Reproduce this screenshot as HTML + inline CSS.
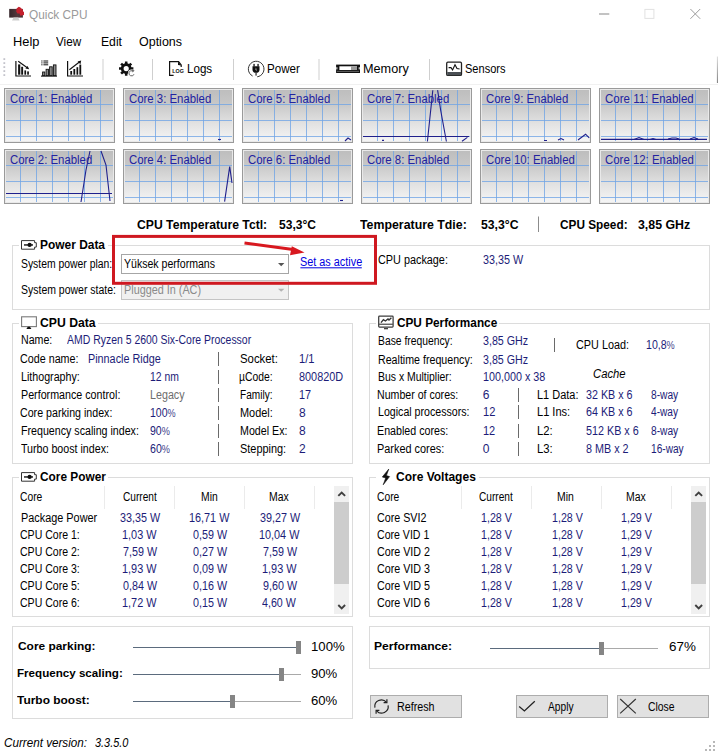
<!DOCTYPE html>
<html><head><meta charset="utf-8"><title>Quick CPU</title>
<style>
html,body{margin:0;padding:0;background:#fff;}
body{width:718px;height:752px;position:relative;overflow:hidden;font-family:"Liberation Sans",sans-serif;}
.t{position:absolute;white-space:nowrap;transform-origin:0 0;}
.a{position:absolute;box-sizing:border-box;}
.core{position:absolute;box-sizing:border-box;width:111px;height:55px;border:1px solid #9a9a9a;background:linear-gradient(#bdbdbd 0%,#c6c6c6 25%,#e2e2e2 65%,#f6f6f6 100%);box-shadow:inset 0 0 0 1px #e9e9e9;}
.gb{position:absolute;box-sizing:border-box;border:1px solid #dcdcdc;}
.btn{position:absolute;box-sizing:border-box;border:1px solid #adadad;background:#e1e1e1;}
svg{position:absolute;left:0;top:0;}
</style></head><body>
<div class="core" style="left:4px;top:88px"></div>
<div class="core" style="left:123px;top:88px"></div>
<div class="core" style="left:242px;top:88px"></div>
<div class="core" style="left:361px;top:88px"></div>
<div class="core" style="left:480px;top:88px"></div>
<div class="core" style="left:599px;top:88px"></div>
<div class="core" style="left:4px;top:149px"></div>
<div class="core" style="left:123px;top:149px"></div>
<div class="core" style="left:242px;top:149px"></div>
<div class="core" style="left:361px;top:149px"></div>
<div class="core" style="left:480px;top:149px"></div>
<div class="core" style="left:599px;top:149px"></div>
<div class="gb" style="left:12px;top:245px;width:698px;height:65px"></div>
<div class="a" style="left:19px;top:243px;width:89px;height:5px;background:#fff"></div>
<div class="gb" style="left:12px;top:323px;width:341px;height:141px"></div>
<div class="a" style="left:19px;top:321px;width:79px;height:5px;background:#fff"></div>
<div class="gb" style="left:369px;top:323px;width:341px;height:141px"></div>
<div class="a" style="left:376px;top:321px;width:123px;height:5px;background:#fff"></div>
<div class="gb" style="left:12px;top:477px;width:341px;height:140px"></div>
<div class="a" style="left:19px;top:475px;width:89px;height:5px;background:#fff"></div>
<div class="gb" style="left:369px;top:477px;width:341px;height:140px"></div>
<div class="a" style="left:376px;top:475px;width:103px;height:5px;background:#fff"></div>
<div class="gb" style="left:12px;top:626px;width:341px;height:93px"></div>
<div class="gb" style="left:369px;top:626px;width:341px;height:43px"></div>
<div class="a" style="left:120.6px;top:253.6px;width:168px;height:20px;border:1px solid #a6a6a6;background:#fff"></div>
<div class="a" style="left:120.6px;top:280px;width:168px;height:20px;border:1px solid #c4c4c4;background:#f0f0f0"></div>
<div class="a" style="left:104px;top:486px;width:1px;height:23px;background:#ebebeb"></div>
<div class="a" style="left:174px;top:486px;width:1px;height:23px;background:#ebebeb"></div>
<div class="a" style="left:244px;top:486px;width:1px;height:23px;background:#ebebeb"></div>
<div class="a" style="left:314px;top:486px;width:1px;height:23px;background:#ebebeb"></div>
<div class="a" style="left:461px;top:486px;width:1px;height:23px;background:#ebebeb"></div>
<div class="a" style="left:531px;top:486px;width:1px;height:23px;background:#ebebeb"></div>
<div class="a" style="left:601px;top:486px;width:1px;height:23px;background:#ebebeb"></div>
<div class="a" style="left:671px;top:486px;width:1px;height:23px;background:#ebebeb"></div>
<div class="a" style="left:334.4px;top:485.7px;width:14.8px;height:128.8px;background:#f0f0f0"></div>
<div class="a" style="left:334.4px;top:501.8px;width:14.6px;height:82.3px;background:#cdcdcd"></div>
<div class="a" style="left:691.4px;top:485.7px;width:14.8px;height:128.8px;background:#f0f0f0"></div>
<div class="a" style="left:691.4px;top:501.8px;width:14.6px;height:82.3px;background:#cdcdcd"></div>
<div class="a" style="left:133px;top:647px;width:163px;height:1px;background:#5b6b7d"></div>
<div class="a" style="left:296px;top:647px;width:5px;height:1px;background:#a9a9a9"></div>
<div class="a" style="left:296px;top:641px;width:4.8px;height:12.8px;background:#858585"></div>
<div class="a" style="left:133px;top:674px;width:146px;height:1px;background:#5b6b7d"></div>
<div class="a" style="left:279px;top:674px;width:22px;height:1px;background:#a9a9a9"></div>
<div class="a" style="left:279px;top:668px;width:4.8px;height:12.8px;background:#858585"></div>
<div class="a" style="left:133px;top:701px;width:97px;height:1px;background:#5b6b7d"></div>
<div class="a" style="left:230px;top:701px;width:71px;height:1px;background:#a9a9a9"></div>
<div class="a" style="left:230px;top:695px;width:4.8px;height:12.8px;background:#858585"></div>
<div class="a" style="left:490px;top:648px;width:109.39999999999998px;height:1px;background:#5b6b7d"></div>
<div class="a" style="left:599.4px;top:648px;width:58.60000000000002px;height:1px;background:#a9a9a9"></div>
<div class="a" style="left:599.4px;top:642px;width:4.8px;height:12.8px;background:#858585"></div>
<div class="btn" style="left:370px;top:695px;width:92px;height:23px"></div>
<div class="btn" style="left:516px;top:695px;width:92px;height:23px"></div>
<div class="btn" style="left:617px;top:695px;width:92px;height:23px"></div>
<div class="a" style="left:218px;top:351.6px;width:1px;height:14px;background:#6a6a6a"></div>
<div class="a" style="left:218px;top:369.5px;width:1px;height:14px;background:#6a6a6a"></div>
<div class="a" style="left:218px;top:387.5px;width:1px;height:14px;background:#6a6a6a"></div>
<div class="a" style="left:218px;top:405.5px;width:1px;height:14px;background:#6a6a6a"></div>
<div class="a" style="left:218px;top:423.5px;width:1px;height:14px;background:#6a6a6a"></div>
<div class="a" style="left:218px;top:441.5px;width:1px;height:14px;background:#6a6a6a"></div>
<div class="a" style="left:554px;top:337.5px;width:1px;height:14.5px;background:#6a6a6a"></div>
<div class="a" style="left:518px;top:387.5px;width:1px;height:14px;background:#6a6a6a"></div>
<div class="a" style="left:518px;top:404.7px;width:1px;height:14px;background:#6a6a6a"></div>
<div class="a" style="left:518px;top:423.5px;width:1px;height:14px;background:#6a6a6a"></div>
<div class="a" style="left:518px;top:441.5px;width:1px;height:14px;background:#6a6a6a"></div>
<svg width="718" height="752" viewBox="0 0 718 752">
<rect x="0" y="84" width="718" height="1" fill="#f1f1f1"/>
<rect x="20" y="90" width="1" height="51" fill="#6fa4e6" opacity="0.78"/>
<rect x="36" y="90" width="1" height="51" fill="#6fa4e6" opacity="0.78"/>
<rect x="52" y="90" width="1" height="51" fill="#6fa4e6" opacity="0.78"/>
<rect x="68" y="90" width="1" height="51" fill="#6fa4e6" opacity="0.78"/>
<rect x="84" y="90" width="1" height="51" fill="#6fa4e6" opacity="0.78"/>
<rect x="100" y="90" width="1" height="51" fill="#6fa4e6" opacity="0.78"/>
<rect x="6" y="104" width="107" height="1" fill="#6fa4e6" opacity="0.78"/>
<rect x="6" y="120" width="107" height="1" fill="#6fa4e6" opacity="0.78"/>
<rect x="6" y="136" width="107" height="1" fill="#6fa4e6" opacity="0.78"/>
<rect x="139" y="90" width="1" height="51" fill="#6fa4e6" opacity="0.78"/>
<rect x="155" y="90" width="1" height="51" fill="#6fa4e6" opacity="0.78"/>
<rect x="171" y="90" width="1" height="51" fill="#6fa4e6" opacity="0.78"/>
<rect x="187" y="90" width="1" height="51" fill="#6fa4e6" opacity="0.78"/>
<rect x="203" y="90" width="1" height="51" fill="#6fa4e6" opacity="0.78"/>
<rect x="219" y="90" width="1" height="51" fill="#6fa4e6" opacity="0.78"/>
<rect x="125" y="104" width="107" height="1" fill="#6fa4e6" opacity="0.78"/>
<rect x="125" y="120" width="107" height="1" fill="#6fa4e6" opacity="0.78"/>
<rect x="125" y="136" width="107" height="1" fill="#6fa4e6" opacity="0.78"/>
<rect x="258" y="90" width="1" height="51" fill="#6fa4e6" opacity="0.78"/>
<rect x="274" y="90" width="1" height="51" fill="#6fa4e6" opacity="0.78"/>
<rect x="290" y="90" width="1" height="51" fill="#6fa4e6" opacity="0.78"/>
<rect x="306" y="90" width="1" height="51" fill="#6fa4e6" opacity="0.78"/>
<rect x="322" y="90" width="1" height="51" fill="#6fa4e6" opacity="0.78"/>
<rect x="338" y="90" width="1" height="51" fill="#6fa4e6" opacity="0.78"/>
<rect x="244" y="104" width="107" height="1" fill="#6fa4e6" opacity="0.78"/>
<rect x="244" y="120" width="107" height="1" fill="#6fa4e6" opacity="0.78"/>
<rect x="244" y="136" width="107" height="1" fill="#6fa4e6" opacity="0.78"/>
<rect x="377" y="90" width="1" height="51" fill="#6fa4e6" opacity="0.78"/>
<rect x="393" y="90" width="1" height="51" fill="#6fa4e6" opacity="0.78"/>
<rect x="409" y="90" width="1" height="51" fill="#6fa4e6" opacity="0.78"/>
<rect x="425" y="90" width="1" height="51" fill="#6fa4e6" opacity="0.78"/>
<rect x="441" y="90" width="1" height="51" fill="#6fa4e6" opacity="0.78"/>
<rect x="457" y="90" width="1" height="51" fill="#6fa4e6" opacity="0.78"/>
<rect x="363" y="104" width="107" height="1" fill="#6fa4e6" opacity="0.78"/>
<rect x="363" y="120" width="107" height="1" fill="#6fa4e6" opacity="0.78"/>
<rect x="363" y="136" width="107" height="1" fill="#6fa4e6" opacity="0.78"/>
<rect x="496" y="90" width="1" height="51" fill="#6fa4e6" opacity="0.78"/>
<rect x="512" y="90" width="1" height="51" fill="#6fa4e6" opacity="0.78"/>
<rect x="528" y="90" width="1" height="51" fill="#6fa4e6" opacity="0.78"/>
<rect x="544" y="90" width="1" height="51" fill="#6fa4e6" opacity="0.78"/>
<rect x="560" y="90" width="1" height="51" fill="#6fa4e6" opacity="0.78"/>
<rect x="576" y="90" width="1" height="51" fill="#6fa4e6" opacity="0.78"/>
<rect x="482" y="104" width="107" height="1" fill="#6fa4e6" opacity="0.78"/>
<rect x="482" y="120" width="107" height="1" fill="#6fa4e6" opacity="0.78"/>
<rect x="482" y="136" width="107" height="1" fill="#6fa4e6" opacity="0.78"/>
<rect x="615" y="90" width="1" height="51" fill="#6fa4e6" opacity="0.78"/>
<rect x="631" y="90" width="1" height="51" fill="#6fa4e6" opacity="0.78"/>
<rect x="647" y="90" width="1" height="51" fill="#6fa4e6" opacity="0.78"/>
<rect x="663" y="90" width="1" height="51" fill="#6fa4e6" opacity="0.78"/>
<rect x="679" y="90" width="1" height="51" fill="#6fa4e6" opacity="0.78"/>
<rect x="695" y="90" width="1" height="51" fill="#6fa4e6" opacity="0.78"/>
<rect x="601" y="104" width="107" height="1" fill="#6fa4e6" opacity="0.78"/>
<rect x="601" y="120" width="107" height="1" fill="#6fa4e6" opacity="0.78"/>
<rect x="601" y="136" width="107" height="1" fill="#6fa4e6" opacity="0.78"/>
<rect x="20" y="151" width="1" height="51" fill="#6fa4e6" opacity="0.78"/>
<rect x="36" y="151" width="1" height="51" fill="#6fa4e6" opacity="0.78"/>
<rect x="52" y="151" width="1" height="51" fill="#6fa4e6" opacity="0.78"/>
<rect x="68" y="151" width="1" height="51" fill="#6fa4e6" opacity="0.78"/>
<rect x="84" y="151" width="1" height="51" fill="#6fa4e6" opacity="0.78"/>
<rect x="100" y="151" width="1" height="51" fill="#6fa4e6" opacity="0.78"/>
<rect x="6" y="165" width="107" height="1" fill="#6fa4e6" opacity="0.78"/>
<rect x="6" y="181" width="107" height="1" fill="#6fa4e6" opacity="0.78"/>
<rect x="6" y="197" width="107" height="1" fill="#6fa4e6" opacity="0.78"/>
<rect x="139" y="151" width="1" height="51" fill="#6fa4e6" opacity="0.78"/>
<rect x="155" y="151" width="1" height="51" fill="#6fa4e6" opacity="0.78"/>
<rect x="171" y="151" width="1" height="51" fill="#6fa4e6" opacity="0.78"/>
<rect x="187" y="151" width="1" height="51" fill="#6fa4e6" opacity="0.78"/>
<rect x="203" y="151" width="1" height="51" fill="#6fa4e6" opacity="0.78"/>
<rect x="219" y="151" width="1" height="51" fill="#6fa4e6" opacity="0.78"/>
<rect x="125" y="165" width="107" height="1" fill="#6fa4e6" opacity="0.78"/>
<rect x="125" y="181" width="107" height="1" fill="#6fa4e6" opacity="0.78"/>
<rect x="125" y="197" width="107" height="1" fill="#6fa4e6" opacity="0.78"/>
<rect x="258" y="151" width="1" height="51" fill="#6fa4e6" opacity="0.78"/>
<rect x="274" y="151" width="1" height="51" fill="#6fa4e6" opacity="0.78"/>
<rect x="290" y="151" width="1" height="51" fill="#6fa4e6" opacity="0.78"/>
<rect x="306" y="151" width="1" height="51" fill="#6fa4e6" opacity="0.78"/>
<rect x="322" y="151" width="1" height="51" fill="#6fa4e6" opacity="0.78"/>
<rect x="338" y="151" width="1" height="51" fill="#6fa4e6" opacity="0.78"/>
<rect x="244" y="165" width="107" height="1" fill="#6fa4e6" opacity="0.78"/>
<rect x="244" y="181" width="107" height="1" fill="#6fa4e6" opacity="0.78"/>
<rect x="244" y="197" width="107" height="1" fill="#6fa4e6" opacity="0.78"/>
<rect x="377" y="151" width="1" height="51" fill="#6fa4e6" opacity="0.78"/>
<rect x="393" y="151" width="1" height="51" fill="#6fa4e6" opacity="0.78"/>
<rect x="409" y="151" width="1" height="51" fill="#6fa4e6" opacity="0.78"/>
<rect x="425" y="151" width="1" height="51" fill="#6fa4e6" opacity="0.78"/>
<rect x="441" y="151" width="1" height="51" fill="#6fa4e6" opacity="0.78"/>
<rect x="457" y="151" width="1" height="51" fill="#6fa4e6" opacity="0.78"/>
<rect x="363" y="165" width="107" height="1" fill="#6fa4e6" opacity="0.78"/>
<rect x="363" y="181" width="107" height="1" fill="#6fa4e6" opacity="0.78"/>
<rect x="363" y="197" width="107" height="1" fill="#6fa4e6" opacity="0.78"/>
<rect x="496" y="151" width="1" height="51" fill="#6fa4e6" opacity="0.78"/>
<rect x="512" y="151" width="1" height="51" fill="#6fa4e6" opacity="0.78"/>
<rect x="528" y="151" width="1" height="51" fill="#6fa4e6" opacity="0.78"/>
<rect x="544" y="151" width="1" height="51" fill="#6fa4e6" opacity="0.78"/>
<rect x="560" y="151" width="1" height="51" fill="#6fa4e6" opacity="0.78"/>
<rect x="576" y="151" width="1" height="51" fill="#6fa4e6" opacity="0.78"/>
<rect x="482" y="165" width="107" height="1" fill="#6fa4e6" opacity="0.78"/>
<rect x="482" y="181" width="107" height="1" fill="#6fa4e6" opacity="0.78"/>
<rect x="482" y="197" width="107" height="1" fill="#6fa4e6" opacity="0.78"/>
<rect x="615" y="151" width="1" height="51" fill="#6fa4e6" opacity="0.78"/>
<rect x="631" y="151" width="1" height="51" fill="#6fa4e6" opacity="0.78"/>
<rect x="647" y="151" width="1" height="51" fill="#6fa4e6" opacity="0.78"/>
<rect x="663" y="151" width="1" height="51" fill="#6fa4e6" opacity="0.78"/>
<rect x="679" y="151" width="1" height="51" fill="#6fa4e6" opacity="0.78"/>
<rect x="695" y="151" width="1" height="51" fill="#6fa4e6" opacity="0.78"/>
<rect x="601" y="165" width="107" height="1" fill="#6fa4e6" opacity="0.78"/>
<rect x="601" y="181" width="107" height="1" fill="#6fa4e6" opacity="0.78"/>
<rect x="601" y="197" width="107" height="1" fill="#6fa4e6" opacity="0.78"/>
<path d="M6 193.5H112" stroke="#20208c" stroke-width="1.1" fill="none" stroke-width="1.3"/>
<path d="M81 202 L86 170 L90 151" stroke="#20208c" stroke-width="1.1" fill="none"/>
<path d="M101 151 L106 165 L110 201" stroke="#20208c" stroke-width="1.1" fill="none"/>
<path d="M224.6 201.6 L229.7 166.6 L232 183" stroke="#20208c" stroke-width="1.1" fill="none" stroke-width="1.2"/>
<path d="M218 139.5h3" stroke="#20208c" stroke-width="1.1" fill="none"/>
<path d="M345 141l3-3 3 2" stroke="#20208c" stroke-width="1.1" fill="none"/>
<path d="M340 200.5h3" stroke="#20208c" stroke-width="1.1" fill="none"/>
<path d="M363 136.5H469" stroke="#20208c" stroke-width="1.1" fill="none" stroke-width="1.3"/>
<path d="M427.4 141.5 L432.8 90.2 M437.6 90.2 L440.8 111 L446.4 141.5" stroke="#20208c" stroke-width="1.1" fill="none" stroke-width="1.2"/>
<path d="M382 140.4h2" stroke="#20208c" stroke-width="1.1" fill="none"/>
<path d="M462 141.2l5.4-3.8" stroke="#20208c" stroke-width="1.1" fill="none" stroke-width="1.3"/>
<path d="M544 140.5h3 M558 140l3-1.5 3 1.5 M578 140l7.6-5.8 3.6 3.6" stroke="#20208c" stroke-width="1.1" fill="none"/>
<path d="M601 139.4H707" stroke="#20208c" stroke-width="1.1" fill="none" stroke-width="1.7"/>
<path d="M634 139.5l5-2 5 2 M650 139.5l3-1 3 1 M668 139l4-1h4l3 1 M690 139l4-1.5 4 1.5" stroke="#20208c" stroke-width="1.1" fill="none"/>
<defs><linearGradient id="eg" x1="0" x2="0" y1="0" y2="1"><stop offset="0" stop-color="#dedede"/><stop offset="1" stop-color="#858585"/></linearGradient></defs>
<rect x="716.9" y="56.5" width="1.1" height="26.5" fill="url(#eg)"/>
<rect x="538" y="216.5" width="1" height="15.5" fill="#8c8c8c"/>
<rect x="113.5" y="236.4" width="262" height="46.9" fill="none" stroke="#cf1820" stroke-width="3"/>
<path d="M244.5 243 L293 249.6" stroke="#d8181f" stroke-width="3" fill="none"/>
<path d="M291.8 246.2 L304.5 252.6 L290 255.2 Z" fill="#d8181f"/>
<defs><linearGradient id="mg" x1="0" x2="1" y1="0" y2="0"><stop offset="0" stop-color="#35262a"/><stop offset="0.6" stop-color="#54383d"/><stop offset="1" stop-color="#4a3034"/></linearGradient></defs>
<rect x="9.2" y="8.9" width="13.7" height="8.7" fill="url(#mg)"/>
<path d="M12 20.5 L13.6 17.6 H18.2 L19.6 20.5 Z" fill="#cdcdcd"/>
<path d="M16.2 11.6 L16.6 8.6 L18.8 6.8 L20.4 7.4 L21.4 8.6 L22.9 9.4 L22.9 11.2 L24 12 L24 15 L20.2 15.7 L19.6 13.4 L17.4 13.4 Z" fill="#c4202d"/>
<rect x="599" y="13.5" width="10.3" height="1" fill="#888"/>
<rect x="644.9" y="9.4" width="9" height="9" fill="none" stroke="#e2e2e2" stroke-width="1"/>
<path d="M690.4 9 L700.2 18.8 M700.2 9 L690.4 18.8" stroke="#9c9c9c" stroke-width="1" fill="none"/>
<rect x="3.4" y="58.2" width="1.8" height="1.8" fill="#c3c3cb"/>
<rect x="3.4" y="62.2" width="1.8" height="1.8" fill="#c3c3cb"/>
<rect x="3.4" y="66.2" width="1.8" height="1.8" fill="#c3c3cb"/>
<rect x="3.4" y="70.2" width="1.8" height="1.8" fill="#c3c3cb"/>
<rect x="3.4" y="74.2" width="1.8" height="1.8" fill="#c3c3cb"/>
<rect x="102.5" y="59" width="1" height="21" fill="#cfcfcf"/>
<rect x="152.0" y="59" width="1" height="21" fill="#cfcfcf"/>
<rect x="233.0" y="59" width="1" height="21" fill="#cfcfcf"/>
<rect x="318.5" y="59" width="1" height="21" fill="#cfcfcf"/>
<rect x="429.0" y="59" width="1" height="21" fill="#cfcfcf"/>
<path d="M15.9 61 V76 H31" stroke="#111" stroke-width="1.2" fill="none"/>
<rect x="18.1" y="64.4" width="2.2" height="10.3" fill="#111"/>
<rect x="21.2" y="66.8" width="1.9" height="7.9" fill="#111"/>
<rect x="24.4" y="70.4" width="1.7" height="4.3" fill="#111"/>
<rect x="27.2" y="71.4" width="1.7" height="3.3" fill="#111"/>
<path d="M18.2 61.2 L27.6 68" stroke="#111" stroke-width="1.1" fill="none"/>
<path d="M29.2 69.2 L25.4 68.4 L27.6 66 Z" fill="#111"/>
<path d="M41 76.1 H57" stroke="#111" stroke-width="1.1" fill="none"/>
<rect x="42.6" y="72" width="2.2" height="3.6" fill="#8c8c8c" stroke="#111" stroke-width="0.9"/>
<rect x="46.1" y="69.3" width="2.4" height="6.3" fill="#8c8c8c" stroke="#111" stroke-width="0.9"/>
<rect x="49.6" y="66.8" width="2.6" height="8.8" fill="#8c8c8c" stroke="#111" stroke-width="0.9"/>
<rect x="53.4" y="64.9" width="2.6" height="10.7" fill="#8c8c8c" stroke="#111" stroke-width="0.9"/>
<rect x="41.3" y="60.5" width="1.2" height="1" fill="#111"/><rect x="43.4" y="60.5" width="4.8" height="1" fill="#111"/>
<rect x="41.3" y="62.4" width="1.2" height="1" fill="#111"/><rect x="43.4" y="62.4" width="4.8" height="1" fill="#111"/>
<rect x="41.3" y="64.3" width="1.2" height="1" fill="#111"/><rect x="43.4" y="64.3" width="4.8" height="1" fill="#111"/>
<path d="M67.6 61 V76 H83" stroke="#111" stroke-width="1.2" fill="none"/>
<rect x="70.3" y="71" width="1.8" height="3.7" fill="#111"/>
<rect x="73.4" y="69" width="1.8" height="5.7" fill="#111"/>
<rect x="76.5" y="67.2" width="1.7" height="7.5" fill="#111"/>
<rect x="79.4" y="64.6" width="1.8" height="10.1" fill="#111"/>
<path d="M69.4 69.8 L79.4 62" stroke="#111" stroke-width="1.1" fill="none"/>
<path d="M81.2 60.6 L80.4 64.2 L77.6 61.4 Z" fill="#111"/>
<path d="M133.39 67.34 L133.39 69.86 L131.45 69.86 L130.80 71.42 L132.17 72.80 L130.40 74.57 L129.02 73.20 L127.46 73.85 L127.46 75.79 L124.94 75.79 L124.94 73.85 L123.38 73.20 L122.00 74.57 L120.23 72.80 L121.60 71.42 L120.95 69.86 L119.01 69.86 L119.01 67.34 L120.95 67.34 L121.60 65.78 L120.23 64.40 L122.00 62.63 L123.38 64.00 L124.94 63.35 L124.94 61.41 L127.46 61.41 L127.46 63.35 L129.02 64.00 L130.40 62.63 L132.17 64.40 L130.80 65.78 L131.45 67.34 Z M128.80 68.60 A2.6 2.6 0 1 0 123.60 68.60 A2.6 2.6 0 1 0 128.80 68.60 Z" fill="#111" fill-rule="evenodd"/>
<circle cx="131.6" cy="73.2" r="3.6" fill="#fff"/>
<path d="M134 74.2 A2.6 2.6 0 1 1 132.6 70.9" stroke="#666" stroke-width="1" fill="none"/>
<path d="M131.6 69.6 L134.6 70.4 L132.6 72.6 Z" fill="#666"/>
<path d="M173.6 75.4 H169.6 V61.6 H178.6 L181.2 65 V67" stroke="#111" stroke-width="1.2" fill="none"/>
<path d="M178 61.6 L181.4 65.6 L178 65 Z" fill="#111"/>
<text x="172.3" y="72.8" font-family="Liberation Sans, sans-serif" font-weight="700" font-size="6.2" textLength="11.6" lengthAdjust="spacingAndGlyphs" fill="#111">LOG</text>
<path d="M252.6 76 A7.8 7.8 0 1 1 257.2 76.8" stroke="#333" stroke-width="1" fill="none"/>
<path d="M252.5 66.3 H259.5 V69.4 Q259.5 72.8 256 72.8 Q252.5 72.8 252.5 69.4 Z" fill="#111"/>
<rect x="253.4" y="63.9" width="1.3" height="2.6" fill="#111"/><rect x="257.4" y="63.9" width="1.3" height="2.6" fill="#111"/>
<rect x="255.5" y="72.6" width="1.1" height="3" fill="#111"/>
<path d="M255.4 67.6 L256.8 69.2 L256 69.4 L257 71.2 L255.2 69.6 L256 69.2 Z" fill="#fff"/>
<rect x="336.1" y="64.6" width="23.9" height="8.4" fill="#111"/>
<rect x="339.4" y="66.3" width="17.6" height="3.7" fill="#fff"/>
<rect x="351" y="66.3" width="6" height="3.7" fill="#9a9a9a"/>
<rect x="336.1" y="67.2" width="1.4" height="2.2" fill="#bbb"/><rect x="358.6" y="67.2" width="1.4" height="2.2" fill="#bbb"/>
<rect x="337" y="70.9" width="22" height="0.7" fill="#888"/>
<rect x="446.7" y="62.2" width="14.8" height="13.2" rx="1.2" fill="#fff" stroke="#222" stroke-width="1.3"/>
<rect x="447.2" y="72" width="13.8" height="3.2" fill="#4a4f54"/>
<path d="M448.6 67.6 H451 L452.6 70 L455 64.8 L457 68.6 L459.6 69" stroke="#111" stroke-width="1.1" fill="none"/>
<path d="M21.5 240.6 H34.6 V242.7 H36.3 V247.1 H34.6 V249.2 H21.5 Z" fill="#fff" stroke="#333" stroke-width="1"/>
<rect x="24" y="244.2" width="9" height="1.5" fill="#222"/>
<ellipse cx="29.6" cy="244.95" rx="2.1" ry="2.1" fill="#111"/>
<path d="M21.5 472.6 H34.6 V474.70000000000005 H36.3 V479.1 H34.6 V481.20000000000005 H21.5 Z" fill="#fff" stroke="#333" stroke-width="1"/>
<rect x="24" y="476.20000000000005" width="9" height="1.5" fill="#222"/>
<ellipse cx="29.6" cy="476.95000000000005" rx="2.1" ry="2.1" fill="#111"/>
<rect x="21.6" y="316.8" width="14.8" height="9.8" fill="#fff" stroke="#7a7a7a" stroke-width="1.1"/>
<path d="M26.4 329 L27.8 326.8 H30 L31.4 329 Z" fill="#111"/>
<rect x="378.7" y="316.1" width="14.4" height="11" rx="0.8" fill="#fff" stroke="#3c3c3c" stroke-width="1.25"/>
<rect x="379" y="323.6" width="14" height="1.3" fill="#555"/>
<path d="M381 322.6 L383.4 319.6 L385.4 321 L388 319 L389 320 L391.4 317.8" stroke="#333" stroke-width="1.4" fill="none"/>
<rect x="384" y="328" width="4" height="1.3" fill="#444"/>
<path d="M388.8 469 L382.3 477 L385.7 478 L383.2 484.8 L389.6 476.6 L386.4 475.6 Z" fill="#111" stroke="#111" stroke-width="0.6"/>
<path d="M278 263.1 H284.4 L281.2 266.2 Z" fill="#555"/>
<path d="M278 288.8 H284.4 L281.2 291.8 Z" fill="#b4b4b4"/>
<rect x="300.4" y="267.3" width="61.4" height="1" fill="#0000e0"/>
<path d="M338.3 495.9 L341.7 492.5 L345.09999999999997 495.9" stroke="#404040" stroke-width="1.9" fill="none"/>
<path d="M338.3 605 L341.7 608.4 L345.09999999999997 605" stroke="#404040" stroke-width="1.9" fill="none"/>
<path d="M695.3 495.9 L698.6999999999999 492.5 L702.0999999999999 495.9" stroke="#404040" stroke-width="1.9" fill="none"/>
<path d="M695.3 605 L698.6999999999999 608.4 L702.0999999999999 605" stroke="#404040" stroke-width="1.9" fill="none"/>
<path d="M374.9 707.6 A6.6 6.6 0 0 1 386.4 702.2 M388.1 705.4 A6.6 6.6 0 0 1 376.6 710.8" stroke="#222" stroke-width="1.2" fill="none"/>
<path d="M383.6 702.6 H386.9 V699.2 M379.4 710.4 H376.1 V713.8" stroke="#222" stroke-width="1.2" fill="none"/>
<path d="M519.2 706.4 L524.4 710.9 L534.8 701.3" stroke="#222" stroke-width="1.3" fill="none"/>
<path d="M620.2 699 L635.8 713.4 M635.8 699 L620.2 713.4" stroke="#333" stroke-width="1.15" fill="none"/>
<rect x="713" y="741" width="2" height="2" fill="#b8b8b8"/>
<rect x="709" y="745" width="2" height="2" fill="#b8b8b8"/>
<rect x="713" y="745" width="2" height="2" fill="#b8b8b8"/>
<rect x="705" y="749" width="2" height="2" fill="#b8b8b8"/>
<rect x="709" y="749" width="2" height="2" fill="#b8b8b8"/>
<rect x="713" y="749" width="2" height="2" fill="#b8b8b8"/>
</svg>
<span class="t" style="left:28.50px;top:7.00px;font-size:12.5px;line-height:16px;color:#9a9a9a;transform:scaleX(0.9461);">Quick CPU</span>
<span class="t" style="left:12.55px;top:34.00px;font-size:13px;line-height:16px;color:#000;transform:scaleX(0.9861);">Help</span>
<span class="t" style="left:56.25px;top:34.00px;font-size:13px;line-height:16px;color:#000;transform:scaleX(0.9010);">View</span>
<span class="t" style="left:100.55px;top:34.00px;font-size:13px;line-height:16px;color:#000;transform:scaleX(0.9365);">Edit</span>
<span class="t" style="left:139.25px;top:34.00px;font-size:13px;line-height:16px;color:#000;transform:scaleX(0.9598);">Options</span>
<span class="t" style="left:187.20px;top:61.00px;font-size:13px;line-height:16px;color:#000;transform:scaleX(0.8925);">Logs</span>
<span class="t" style="left:267.05px;top:61.00px;font-size:13px;line-height:16px;color:#000;transform:scaleX(0.8916);">Power</span>
<span class="t" style="left:362.65px;top:61.00px;font-size:13px;line-height:16px;color:#000;transform:scaleX(0.9738);">Memory</span>
<span class="t" style="left:464.60px;top:61.00px;font-size:13px;line-height:16px;color:#000;transform:scaleX(0.8495);">Sensors</span>
<span class="t" style="left:9.75px;top:91.00px;font-size:12.3px;line-height:16px;color:#2323a0;transform:scaleX(0.9255);">Core 1: Enabled</span>
<span class="t" style="left:128.75px;top:91.00px;font-size:12.3px;line-height:16px;color:#2323a0;transform:scaleX(0.9255);">Core 3: Enabled</span>
<span class="t" style="left:247.75px;top:91.00px;font-size:12.3px;line-height:16px;color:#2323a0;transform:scaleX(0.9255);">Core 5: Enabled</span>
<span class="t" style="left:366.75px;top:91.00px;font-size:12.3px;line-height:16px;color:#2323a0;transform:scaleX(0.9255);">Core 7: Enabled</span>
<span class="t" style="left:485.75px;top:91.00px;font-size:12.3px;line-height:16px;color:#2323a0;transform:scaleX(0.9255);">Core 9: Enabled</span>
<span class="t" style="left:604.75px;top:91.00px;font-size:12.3px;line-height:16px;color:#2323a0;transform:scaleX(0.9357);">Core 11: Enabled</span>
<span class="t" style="left:9.75px;top:152.00px;font-size:12.3px;line-height:16px;color:#2323a0;transform:scaleX(0.9255);">Core 2: Enabled</span>
<span class="t" style="left:128.75px;top:152.00px;font-size:12.3px;line-height:16px;color:#2323a0;transform:scaleX(0.9255);">Core 4: Enabled</span>
<span class="t" style="left:247.75px;top:152.00px;font-size:12.3px;line-height:16px;color:#2323a0;transform:scaleX(0.9255);">Core 6: Enabled</span>
<span class="t" style="left:366.75px;top:152.00px;font-size:12.3px;line-height:16px;color:#2323a0;transform:scaleX(0.9255);">Core 8: Enabled</span>
<span class="t" style="left:485.75px;top:152.00px;font-size:12.3px;line-height:16px;color:#2323a0;transform:scaleX(0.9284);">Core 10: Enabled</span>
<span class="t" style="left:604.75px;top:152.00px;font-size:12.3px;line-height:16px;color:#2323a0;transform:scaleX(0.9284);">Core 12: Enabled</span>
<span class="t" style="left:137.00px;top:217.00px;font-size:12.3px;line-height:16px;color:#000;font-weight:700;transform:scaleX(0.9904);">CPU Temperature Tctl:</span>
<span class="t" style="left:279.40px;top:217.00px;font-size:12.3px;line-height:16px;color:#000;font-weight:700;transform:scaleX(0.9796);">53,3°C</span>
<span class="t" style="left:359.50px;top:217.00px;font-size:12.3px;line-height:16px;color:#000;font-weight:700;transform:scaleX(1.0038);">Temperature Tdie:</span>
<span class="t" style="left:480.50px;top:217.00px;font-size:12.3px;line-height:16px;color:#000;font-weight:700;transform:scaleX(0.9932);">53,3°C</span>
<span class="t" style="left:560.00px;top:217.00px;font-size:12.3px;line-height:16px;color:#000;font-weight:700;transform:scaleX(0.9600);">CPU Speed:</span>
<span class="t" style="left:637.75px;top:217.00px;font-size:12.3px;line-height:16px;color:#000;font-weight:700;transform:scaleX(1.0049);">3,85 GHz</span>
<span class="t" style="left:39.75px;top:237.00px;font-size:12px;line-height:16px;color:#000;font-weight:700;transform:scaleX(0.9946);">Power Data</span>
<span class="t" style="left:21.05px;top:256.00px;font-size:12px;line-height:16px;color:#000;transform:scaleX(0.8657);">System power plan:</span>
<span class="t" style="left:21.00px;top:282.00px;font-size:12px;line-height:16px;color:#000;transform:scaleX(0.8734);">System power state:</span>
<span class="t" style="left:124.35px;top:256.00px;font-size:12px;line-height:16px;color:#000;transform:scaleX(0.8805);">Yüksek performans</span>
<span class="t" style="left:123.75px;top:282.00px;font-size:12px;line-height:16px;color:#8a8a8a;transform:scaleX(0.9022);">Plugged In (AC)</span>
<span class="t" style="left:300.00px;top:254.00px;font-size:12px;line-height:16px;color:#0000e0;transform:scaleX(0.9055);">Set as active</span>
<span class="t" style="left:377.65px;top:252.00px;font-size:12px;line-height:16px;color:#000;transform:scaleX(0.9036);">CPU package:</span>
<span class="t" style="left:482.60px;top:252.00px;font-size:12px;line-height:16px;color:#1c1c78;transform:scaleX(0.8989);">33,35 W</span>
<span class="t" style="left:39.50px;top:315.00px;font-size:12px;line-height:16px;color:#000;font-weight:700;transform:scaleX(1.0166);">CPU Data</span>
<span class="t" style="left:21.00px;top:332.00px;font-size:12px;line-height:16px;color:#000;transform:scaleX(0.8857);">Name:</span>
<span class="t" style="left:67.10px;top:332.00px;font-size:12px;line-height:16px;color:#1c1c78;transform:scaleX(0.8710);">AMD Ryzen 5 2600 Six-Core Processor</span>
<span class="t" style="left:20.15px;top:351.00px;font-size:12px;line-height:16px;color:#000;transform:scaleX(0.8949);">Code name:</span>
<span class="t" style="left:87.95px;top:351.00px;font-size:12px;line-height:16px;color:#1c1c78;transform:scaleX(0.9003);">Pinnacle Ridge</span>
<span class="t" style="left:21.00px;top:369.00px;font-size:12px;line-height:16px;color:#000;transform:scaleX(0.8906);">Lithography:</span>
<span class="t" style="left:150.00px;top:369.00px;font-size:12px;line-height:16px;color:#1c1c78;transform:scaleX(0.8652);">12 nm</span>
<span class="t" style="left:21.00px;top:387.00px;font-size:12px;line-height:16px;color:#000;transform:scaleX(0.8920);">Performance control:</span>
<span class="t" style="left:149.50px;top:387.00px;font-size:12px;line-height:16px;color:#6e6e6e;transform:scaleX(0.8933);">Legacy</span>
<span class="t" style="left:20.15px;top:405.00px;font-size:12px;line-height:16px;color:#000;transform:scaleX(0.8875);">Core parking index:</span>
<span class="t" style="left:150.30px;top:405.00px;font-size:12px;line-height:16px;color:#1c1c78;transform:scaleX(0.8768);">100<span style="font-size:10.4px;opacity:.85">%</span></span>
<span class="t" style="left:21.25px;top:423.00px;font-size:12px;line-height:16px;color:#000;transform:scaleX(0.8883);">Frequency scaling index:</span>
<span class="t" style="left:149.90px;top:423.00px;font-size:12px;line-height:16px;color:#1c1c78;transform:scaleX(0.8798);">90<span style="font-size:10.4px;opacity:.85">%</span></span>
<span class="t" style="left:21.25px;top:441.00px;font-size:12px;line-height:16px;color:#000;transform:scaleX(0.8890);">Turbo boost index:</span>
<span class="t" style="left:150.15px;top:441.00px;font-size:12px;line-height:16px;color:#1c1c78;transform:scaleX(0.8839);">60<span style="font-size:10.4px;opacity:.85">%</span></span>
<span class="t" style="left:239.65px;top:351.00px;font-size:12px;line-height:16px;color:#000;transform:scaleX(0.9464);">Socket:</span>
<span class="t" style="left:299.45px;top:351.00px;font-size:12px;line-height:16px;color:#1c1c78;transform:scaleX(0.9280);">1/1</span>
<span class="t" style="left:239.45px;top:369.00px;font-size:12px;line-height:16px;color:#000;transform:scaleX(0.8635);">µCode:</span>
<span class="t" style="left:298.60px;top:369.00px;font-size:12px;line-height:16px;color:#1c1c78;transform:scaleX(0.9063);">800820D</span>
<span class="t" style="left:240.35px;top:387.00px;font-size:12px;line-height:16px;color:#000;transform:scaleX(0.8408);">Family:</span>
<span class="t" style="left:299.45px;top:387.00px;font-size:12px;line-height:16px;color:#1c1c78;transform:scaleX(0.9022);">17</span>
<span class="t" style="left:239.85px;top:405.00px;font-size:12px;line-height:16px;color:#000;transform:scaleX(0.9088);">Model:</span>
<span class="t" style="left:299.05px;top:405.00px;font-size:12px;line-height:16px;color:#1c1c78;">8</span>
<span class="t" style="left:239.85px;top:423.00px;font-size:12px;line-height:16px;color:#000;transform:scaleX(0.8894);">Model Ex:</span>
<span class="t" style="left:299.05px;top:423.00px;font-size:12px;line-height:16px;color:#1c1c78;">8</span>
<span class="t" style="left:239.65px;top:441.00px;font-size:12px;line-height:16px;color:#000;transform:scaleX(0.9102);">Stepping:</span>
<span class="t" style="left:299.05px;top:441.00px;font-size:12px;line-height:16px;color:#1c1c78;">2</span>
<span class="t" style="left:396.50px;top:315.00px;font-size:12px;line-height:16px;color:#000;font-weight:700;transform:scaleX(0.9822);">CPU Performance</span>
<span class="t" style="left:377.95px;top:333.00px;font-size:12px;line-height:16px;color:#000;transform:scaleX(0.8608);">Base frequency:</span>
<span class="t" style="left:482.60px;top:333.00px;font-size:12px;line-height:16px;color:#1c1c78;transform:scaleX(0.8899);">3,85 GHz</span>
<span class="t" style="left:575.60px;top:337.00px;font-size:12px;line-height:16px;color:#000;transform:scaleX(0.9026);">CPU Load:</span>
<span class="t" style="left:646.45px;top:337.00px;font-size:12px;line-height:16px;color:#1c1c78;transform:scaleX(0.8816);">10,8<span style="font-size:10.4px;opacity:.85">%</span></span>
<span class="t" style="left:377.70px;top:352.00px;font-size:12px;line-height:16px;color:#000;transform:scaleX(0.8873);">Realtime frequency:</span>
<span class="t" style="left:483.35px;top:352.00px;font-size:12px;line-height:16px;color:#1c1c78;transform:scaleX(0.8878);">3,85 GHz</span>
<span class="t" style="left:377.95px;top:369.00px;font-size:12px;line-height:16px;color:#000;transform:scaleX(0.8695);">Bus x Multiplier:</span>
<span class="t" style="left:482.85px;top:369.00px;font-size:12px;line-height:16px;color:#1c1c78;transform:scaleX(0.8985);">100,000 x 38</span>
<span class="t" style="left:593.10px;top:366.00px;font-size:12px;line-height:16px;color:#000;font-style:italic;transform:scaleX(0.9388);">Cache</span>
<span class="t" style="left:377.45px;top:387.00px;font-size:12px;line-height:16px;color:#000;transform:scaleX(0.8833);">Number of cores:</span>
<span class="t" style="left:482.85px;top:387.00px;font-size:12px;line-height:16px;color:#1c1c78;">6</span>
<span class="t" style="left:377.70px;top:404.00px;font-size:12px;line-height:16px;color:#000;transform:scaleX(0.8849);">Logical processors:</span>
<span class="t" style="left:482.85px;top:404.00px;font-size:12px;line-height:16px;color:#1c1c78;transform:scaleX(0.9243);">12</span>
<span class="t" style="left:377.45px;top:423.00px;font-size:12px;line-height:16px;color:#000;transform:scaleX(0.8910);">Enabled cores:</span>
<span class="t" style="left:482.85px;top:423.00px;font-size:12px;line-height:16px;color:#1c1c78;transform:scaleX(0.9167);">12</span>
<span class="t" style="left:377.45px;top:441.00px;font-size:12px;line-height:16px;color:#000;transform:scaleX(0.9076);">Parked cores:</span>
<span class="t" style="left:482.85px;top:441.00px;font-size:12px;line-height:16px;color:#1c1c78;">0</span>
<span class="t" style="left:536.50px;top:387.00px;font-size:12px;line-height:16px;color:#000;transform:scaleX(0.9145);">L1 Data:</span>
<span class="t" style="left:586.05px;top:387.00px;font-size:12px;line-height:16px;color:#1c1c78;transform:scaleX(0.8931);">32 KB x 6</span>
<span class="t" style="left:650.60px;top:387.00px;font-size:12px;line-height:16px;color:#1c1c78;transform:scaleX(0.8496);">8-way</span>
<span class="t" style="left:536.50px;top:404.00px;font-size:12px;line-height:16px;color:#000;transform:scaleX(0.9206);">L1 Ins:</span>
<span class="t" style="left:586.05px;top:404.00px;font-size:12px;line-height:16px;color:#1c1c78;transform:scaleX(0.8931);">64 KB x 6</span>
<span class="t" style="left:651.35px;top:404.00px;font-size:12px;line-height:16px;color:#1c1c78;transform:scaleX(0.8429);">4-way</span>
<span class="t" style="left:536.50px;top:423.00px;font-size:12px;line-height:16px;color:#000;transform:scaleX(0.9427);">L2:</span>
<span class="t" style="left:586.05px;top:423.00px;font-size:12px;line-height:16px;color:#1c1c78;transform:scaleX(0.8970);">512 KB x 6</span>
<span class="t" style="left:650.60px;top:423.00px;font-size:12px;line-height:16px;color:#1c1c78;transform:scaleX(0.8496);">8-way</span>
<span class="t" style="left:536.50px;top:441.00px;font-size:12px;line-height:16px;color:#000;transform:scaleX(0.9427);">L3:</span>
<span class="t" style="left:586.05px;top:441.00px;font-size:12px;line-height:16px;color:#1c1c78;transform:scaleX(0.8984);">8 MB x 2</span>
<span class="t" style="left:651.45px;top:441.00px;font-size:12px;line-height:16px;color:#1c1c78;transform:scaleX(0.8437);">16-way</span>
<span class="t" style="left:39.50px;top:469.00px;font-size:12px;line-height:16px;color:#000;font-weight:700;transform:scaleX(0.9871);">Core Power</span>
<span class="t" style="left:20.15px;top:489.00px;font-size:12px;line-height:16px;color:#000;transform:scaleX(0.8566);">Core</span>
<span class="t" style="left:122.70px;top:489.00px;font-size:12px;line-height:16px;color:#000;transform:scaleX(0.8433);">Current</span>
<span class="t" style="left:200.95px;top:489.00px;font-size:12px;line-height:16px;color:#000;transform:scaleX(0.8631);">Min</span>
<span class="t" style="left:269.40px;top:489.00px;font-size:12px;line-height:16px;color:#000;transform:scaleX(0.8698);">Max</span>
<span class="t" style="left:20.90px;top:510.00px;font-size:12px;line-height:16px;color:#000;transform:scaleX(0.9060);">Package Power</span>
<span class="t" style="left:119.55px;top:510.00px;font-size:12px;line-height:16px;color:#1c1c78;transform:scaleX(0.8989);">33,35 W</span>
<span class="t" style="left:188.80px;top:510.00px;font-size:12px;line-height:16px;color:#1c1c78;transform:scaleX(0.9040);">16,71 W</span>
<span class="t" style="left:259.55px;top:510.00px;font-size:12px;line-height:16px;color:#1c1c78;transform:scaleX(0.8989);">39,27 W</span>
<span class="t" style="left:20.15px;top:527.00px;font-size:12px;line-height:16px;color:#000;transform:scaleX(0.8785);">CPU Core 1:</span>
<span class="t" style="left:121.80px;top:527.00px;font-size:12px;line-height:16px;color:#1c1c78;transform:scaleX(0.9074);">1,03 W</span>
<span class="t" style="left:192.55px;top:527.00px;font-size:12px;line-height:16px;color:#1c1c78;transform:scaleX(0.8947);">0,59 W</span>
<span class="t" style="left:258.80px;top:527.00px;font-size:12px;line-height:16px;color:#1c1c78;transform:scaleX(0.9040);">10,04 W</span>
<span class="t" style="left:20.15px;top:544.00px;font-size:12px;line-height:16px;color:#000;transform:scaleX(0.8785);">CPU Core 2:</span>
<span class="t" style="left:122.55px;top:544.00px;font-size:12px;line-height:16px;color:#1c1c78;transform:scaleX(0.8947);">7,59 W</span>
<span class="t" style="left:192.55px;top:544.00px;font-size:12px;line-height:16px;color:#1c1c78;transform:scaleX(0.8947);">0,27 W</span>
<span class="t" style="left:262.55px;top:544.00px;font-size:12px;line-height:16px;color:#1c1c78;transform:scaleX(0.8947);">7,59 W</span>
<span class="t" style="left:20.15px;top:561.00px;font-size:12px;line-height:16px;color:#000;transform:scaleX(0.8785);">CPU Core 3:</span>
<span class="t" style="left:121.80px;top:561.00px;font-size:12px;line-height:16px;color:#1c1c78;transform:scaleX(0.9074);">1,93 W</span>
<span class="t" style="left:192.55px;top:561.00px;font-size:12px;line-height:16px;color:#1c1c78;transform:scaleX(0.8947);">0,09 W</span>
<span class="t" style="left:261.80px;top:561.00px;font-size:12px;line-height:16px;color:#1c1c78;transform:scaleX(0.9074);">1,93 W</span>
<span class="t" style="left:20.15px;top:578.00px;font-size:12px;line-height:16px;color:#000;transform:scaleX(0.8785);">CPU Core 5:</span>
<span class="t" style="left:122.55px;top:578.00px;font-size:12px;line-height:16px;color:#1c1c78;transform:scaleX(0.8947);">0,84 W</span>
<span class="t" style="left:192.55px;top:578.00px;font-size:12px;line-height:16px;color:#1c1c78;transform:scaleX(0.8947);">0,16 W</span>
<span class="t" style="left:262.55px;top:578.00px;font-size:12px;line-height:16px;color:#1c1c78;transform:scaleX(0.8947);">9,60 W</span>
<span class="t" style="left:20.15px;top:595.00px;font-size:12px;line-height:16px;color:#000;transform:scaleX(0.8785);">CPU Core 6:</span>
<span class="t" style="left:121.80px;top:595.00px;font-size:12px;line-height:16px;color:#1c1c78;transform:scaleX(0.9074);">1,72 W</span>
<span class="t" style="left:192.55px;top:595.00px;font-size:12px;line-height:16px;color:#1c1c78;transform:scaleX(0.8947);">0,15 W</span>
<span class="t" style="left:262.30px;top:595.00px;font-size:12px;line-height:16px;color:#1c1c78;transform:scaleX(0.8888);">4,60 W</span>
<span class="t" style="left:396.00px;top:469.00px;font-size:12px;line-height:16px;color:#000;font-weight:700;">Core Voltages</span>
<span class="t" style="left:377.15px;top:489.00px;font-size:12px;line-height:16px;color:#000;transform:scaleX(0.8566);">Core</span>
<span class="t" style="left:479.10px;top:489.00px;font-size:12px;line-height:16px;color:#000;transform:scaleX(0.8446);">Current</span>
<span class="t" style="left:557.40px;top:489.00px;font-size:12px;line-height:16px;color:#000;transform:scaleX(0.8705);">Min</span>
<span class="t" style="left:626.40px;top:489.00px;font-size:12px;line-height:16px;color:#000;transform:scaleX(0.8698);">Max</span>
<span class="t" style="left:377.15px;top:510.00px;font-size:12px;line-height:16px;color:#000;transform:scaleX(0.8926);">Core SVI2</span>
<span class="t" style="left:481.35px;top:510.00px;font-size:12px;line-height:16px;color:#1c1c78;transform:scaleX(0.8889);">1,28 V</span>
<span class="t" style="left:551.50px;top:510.00px;font-size:12px;line-height:16px;color:#1c1c78;transform:scaleX(0.8881);">1,28 V</span>
<span class="t" style="left:621.45px;top:510.00px;font-size:12px;line-height:16px;color:#1c1c78;transform:scaleX(0.8889);">1,29 V</span>
<span class="t" style="left:377.15px;top:527.00px;font-size:12px;line-height:16px;color:#000;transform:scaleX(0.8811);">Core VID 1</span>
<span class="t" style="left:481.35px;top:527.00px;font-size:12px;line-height:16px;color:#1c1c78;transform:scaleX(0.8889);">1,28 V</span>
<span class="t" style="left:551.50px;top:527.00px;font-size:12px;line-height:16px;color:#1c1c78;transform:scaleX(0.8881);">1,28 V</span>
<span class="t" style="left:621.45px;top:527.00px;font-size:12px;line-height:16px;color:#1c1c78;transform:scaleX(0.8889);">1,29 V</span>
<span class="t" style="left:377.15px;top:544.00px;font-size:12px;line-height:16px;color:#000;transform:scaleX(0.8923);">Core VID 2</span>
<span class="t" style="left:481.35px;top:544.00px;font-size:12px;line-height:16px;color:#1c1c78;transform:scaleX(0.8889);">1,28 V</span>
<span class="t" style="left:551.50px;top:544.00px;font-size:12px;line-height:16px;color:#1c1c78;transform:scaleX(0.8881);">1,28 V</span>
<span class="t" style="left:621.45px;top:544.00px;font-size:12px;line-height:16px;color:#1c1c78;transform:scaleX(0.8889);">1,29 V</span>
<span class="t" style="left:377.15px;top:561.00px;font-size:12px;line-height:16px;color:#000;transform:scaleX(0.8927);">Core VID 3</span>
<span class="t" style="left:481.35px;top:561.00px;font-size:12px;line-height:16px;color:#1c1c78;transform:scaleX(0.8889);">1,28 V</span>
<span class="t" style="left:551.50px;top:561.00px;font-size:12px;line-height:16px;color:#1c1c78;transform:scaleX(0.8881);">1,28 V</span>
<span class="t" style="left:621.45px;top:561.00px;font-size:12px;line-height:16px;color:#1c1c78;transform:scaleX(0.8889);">1,29 V</span>
<span class="t" style="left:377.15px;top:578.00px;font-size:12px;line-height:16px;color:#000;transform:scaleX(0.8927);">Core VID 5</span>
<span class="t" style="left:481.35px;top:578.00px;font-size:12px;line-height:16px;color:#1c1c78;transform:scaleX(0.8889);">1,28 V</span>
<span class="t" style="left:551.50px;top:578.00px;font-size:12px;line-height:16px;color:#1c1c78;transform:scaleX(0.8881);">1,28 V</span>
<span class="t" style="left:621.45px;top:578.00px;font-size:12px;line-height:16px;color:#1c1c78;transform:scaleX(0.8889);">1,29 V</span>
<span class="t" style="left:377.15px;top:595.00px;font-size:12px;line-height:16px;color:#000;transform:scaleX(0.8927);">Core VID 6</span>
<span class="t" style="left:481.35px;top:595.00px;font-size:12px;line-height:16px;color:#1c1c78;transform:scaleX(0.8889);">1,28 V</span>
<span class="t" style="left:551.50px;top:595.00px;font-size:12px;line-height:16px;color:#1c1c78;transform:scaleX(0.8881);">1,28 V</span>
<span class="t" style="left:621.45px;top:595.00px;font-size:12px;line-height:16px;color:#1c1c78;transform:scaleX(0.8889);">1,29 V</span>
<span class="t" style="left:17.50px;top:638.00px;font-size:11.5px;line-height:16px;color:#000;font-weight:700;transform:scaleX(1.0362);">Core parking:</span>
<span class="t" style="left:16.75px;top:665.00px;font-size:11.5px;line-height:16px;color:#000;font-weight:700;transform:scaleX(1.0092);">Frequency scaling:</span>
<span class="t" style="left:17.25px;top:692.00px;font-size:11.5px;line-height:16px;color:#000;font-weight:700;transform:scaleX(1.0385);">Turbo boost:</span>
<span class="t" style="left:374.25px;top:638.00px;font-size:11.5px;line-height:16px;color:#000;font-weight:700;transform:scaleX(1.0540);">Performance:</span>
<span class="t" style="left:311.35px;top:639.00px;font-size:13px;line-height:16px;color:#000;transform:scaleX(1.0126);">100%</span>
<span class="t" style="left:311.35px;top:666.00px;font-size:13px;line-height:16px;color:#000;transform:scaleX(1.0101);">90%</span>
<span class="t" style="left:311.35px;top:693.00px;font-size:13px;line-height:16px;color:#000;transform:scaleX(1.0101);">60%</span>
<span class="t" style="left:669.10px;top:639.00px;font-size:13px;line-height:16px;color:#000;transform:scaleX(1.0320);">67%</span>
<span class="t" style="left:396.50px;top:699.00px;font-size:12px;line-height:16px;color:#000;transform:scaleX(0.8944);">Refresh</span>
<span class="t" style="left:548.00px;top:699.00px;font-size:12px;line-height:16px;color:#000;transform:scaleX(0.8500);">Apply</span>
<span class="t" style="left:648.00px;top:699.00px;font-size:12px;line-height:16px;color:#000;transform:scaleX(0.8656);">Close</span>
<span class="t" style="left:4.20px;top:735.00px;font-size:12.6px;line-height:16px;color:#000;font-style:italic;transform:scaleX(0.9266);">Current version:</span>
<span class="t" style="left:94.95px;top:735.00px;font-size:12.6px;line-height:16px;color:#000;font-style:italic;transform:scaleX(0.8682);">3.3.5.0</span>
</body></html>
